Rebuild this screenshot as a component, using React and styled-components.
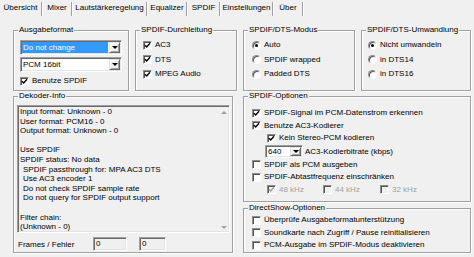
import React from "react";
import styled, { createGlobalStyle, css } from "styled-components";

const FACE = "#f0f0f0";

const GlobalStyle = createGlobalStyle`
  html, body {
    margin: 0;
    padding: 0;
    background: ${FACE};
  }
  body {
    font-family: "Liberation Sans", Arial, sans-serif;
    font-size: 8px;
    color: #000;
  }
`;

const sunken = css`
  box-sizing: border-box;
  border: 1px solid;
  border-color: #a0a0a0 #fff #fff #a0a0a0;
  box-shadow: inset 1px 1px 0 #696969, inset -1px -1px 0 #e3e3e3;
`;

const tabs = [
  ["Übersicht", 43],
  ["Mixer", 30],
  ["Lautstärkeregelung", 75],
  ["Equalizer", 40],
  ["SPDIF", 33],
  ["Einstellungen", 53],
  ["Über", 30],
];

const infoLines = [
  ["Input format: Unknown - 0"],
  ["User format: PCM16 - 0"],
  ["Output format: Unknown - 0"],
  [""],
  ["Use SPDIF"],
  ["SPDIF status: No data"],
  ["SPDIF passthrough for: MPA AC3 DTS", true],
  ["Use AC3 encoder 1", true],
  ["Do not check SPDIF sample rate", true],
  ["Do not query for SPDIF output support", true],
  [""],
  ["Filter chain:"],
  ["(Unknown - 0)"],
];

function Check({ on, disabled }) {
  return (
    <Box $disabled={disabled}>
      {on && (
        <svg width="7" height="7" viewBox="0 0 7 7">
          <path
            d="M1 3.2 L2.7 5 L6 1.3"
            fill="none"
            stroke={disabled ? "#a0a0a0" : "#000"}
            strokeWidth="1.4"
          />
        </svg>
      )}
    </Box>
  );
}

function CheckItem({ on, disabled, children, h, indent }) {
  return (
    <Row $h={h} $indent={indent} $disabled={disabled}>
      <Check on={on} disabled={disabled} />
      {children}
    </Row>
  );
}

function RadioItem({ on, children, h }) {
  return (
    <Row $h={h}>
      <Radio $on={on} />
      {children}
    </Row>
  );
}

function Dropdown({ value, selected, w, h }) {
  return (
    <Combo $w={w} $h={h}>
      <ComboValue $selected={selected}>{value}</ComboValue>
      <DropButton />
    </Combo>
  );
}

export default function App() {
  return (
    <Page>
      <GlobalStyle />
      {/* TAB STRIP */}
      <TabBar>
        {tabs.map(([name, w]) => (
          <Tab key={name} $w={w}>
            <TabLabel>{name}</TabLabel>
            <TabSep />
          </Tab>
        ))}
      </TabBar>

      <Content>
        {/* TOP ROW */}
        <TopRow>
          <Group $pad="9px 0 0 6px">
            <Legend>Ausgabeformat</Legend>
            <Dropdown value="Do not change" selected w={102} h={15} />
            <Spacer $h={2} />
            <Dropdown value="PCM 16bit" w={102} h={15} />
            <Spacer $h={3} />
            <CheckItem on h={12}>
              Benutze SPDIF
            </CheckItem>
          </Group>

          <Group $pad="7px 0 0 7px">
            <Legend>SPDIF-Durchleitung</Legend>
            <CheckItem on>AC3</CheckItem>
            <CheckItem on>DTS</CheckItem>
            <CheckItem on>MPEG Audio</CheckItem>
          </Group>

          <Group $pad="7px 0 0 8px">
            <Legend>SPDIF/DTS-Modus</Legend>
            <RadioItem on>Auto</RadioItem>
            <RadioItem>SPDIF wrapped</RadioItem>
            <RadioItem>Padded DTS</RadioItem>
          </Group>

          <Group $pad="7px 0 0 6px">
            <Legend>SPDIF/DTS-Umwandlung</Legend>
            <RadioItem on>Nicht umwandeln</RadioItem>
            <RadioItem>in DTS14</RadioItem>
            <RadioItem>in DTS16</RadioItem>
          </Group>
        </TopRow>

        {/* BOTTOM ROW */}
        <BottomRow>
          <Group $pad="8px 0 0 3px" $h={157}>
            <Legend>Dekoder-Info</Legend>
            <InfoBox>
              <InfoText>
                {infoLines.map(([t, indent], i) => (
                  <InfoLine key={i} $indent={indent}>
                    {t}
                  </InfoLine>
                ))}
              </InfoText>
              <ScrollCol>
                <ScrollArrow $dir="up" />
                <ScrollArrow $dir="down" />
              </ScrollCol>
            </InfoBox>
            <FramesRow>
              <FramesLabel>Frames / Fehler</FramesLabel>
              <Field $w={34}>0</Field>
              <Field $w={27}>0</Field>
            </FramesRow>
          </Group>

          <RightCol>
            <Group $pad="10px 0 0 8px" $h={106}>
              <Legend>SPDIF-Optionen</Legend>
              <CheckItem on h={12.5}>
                SPDIF-Signal im PCM-Datenstrom erkennen
              </CheckItem>
              <CheckItem on h={12.5}>
                Benutze AC3-Kodierer
              </CheckItem>
              <CheckItem on h={12.5} indent={15}>
                Kein Stereo-PCM kodieren
              </CheckItem>
              <BitrateRow>
                <Dropdown value="640" w={38} h={13} />
                <span>AC3-Kodierbitrate (kbps)</span>
              </BitrateRow>
              <CheckItem h={12.5}>SPDIF als PCM ausgeben</CheckItem>
              <CheckItem h={12.5}>SPDIF-Abtastfrequenz einschränken</CheckItem>
              <FreqRow>
                <CheckItem on disabled h={12.5}>
                  48 kHz
                </CheckItem>
                <CheckItem disabled h={12.5}>
                  44 kHz
                </CheckItem>
                <CheckItem disabled h={12.5}>
                  32 kHz
                </CheckItem>
              </FreqRow>
            </Group>

            <Group $pad="5px 0 0 8px" $h={45}>
              <Legend>DirectShow-Optionen</Legend>
              <CheckItem h={12.5}>Überprüfe Ausgabeformatunterstützung</CheckItem>
              <CheckItem h={12.5}>
                Soundkarte nach Zugriff / Pause reinitialisieren
              </CheckItem>
              <CheckItem h={12.5}>
                PCM-Ausgabe im SPDIF-Modus deaktivieren
              </CheckItem>
            </Group>
          </RightCol>
        </BottomRow>
      </Content>
    </Page>
  );
}

const Page = styled.div`
  width: 474px;
  height: 257px;
  overflow: hidden;
  background: ${FACE};
`;

/* tabs */
const TabBar = styled.div`
  display: flex;
  height: 17px;
`;

const Tab = styled.div`
  display: flex;
  width: ${(p) => p.$w}px;
`;

const TabLabel = styled.span`
  flex: 1;
  text-align: center;
  line-height: 15px;
  white-space: nowrap;
`;

const TabSep = styled.span`
  width: 1px;
  height: 14px;
  margin-top: 2px;
  background: #a0a0a0;
  border-right: 1px solid #fff;
`;

/* layout */
const Content = styled.div`
  padding: 13px 0 0 13px;
  display: flex;
  flex-direction: column;
  gap: 5px;
`;

const TopRow = styled.div`
  display: grid;
  grid-template-columns: 116px 102px 112px 110px;
  column-gap: 6px;
  height: 61px;
`;

const BottomRow = styled.div`
  display: grid;
  grid-template-columns: 220px 228px;
  column-gap: 10px;
`;

const RightCol = styled.div`
  display: flex;
  flex-direction: column;
  gap: 6px;
`;

const Spacer = styled.div`
  height: ${(p) => p.$h}px;
  flex: none;
`;

/* group box */
const Group = styled.div`
  position: relative;
  box-sizing: border-box;
  height: ${(p) => (p.$h ? `${p.$h}px` : "auto")};
  border: 1px solid #a0a0a0;
  box-shadow: inset 1px 1px 0 #fff, 1px 1px 0 #fff;
  padding: ${(p) => p.$pad || "0"};
  display: flex;
  flex-direction: column;
`;

const Legend = styled.span`
  position: absolute;
  top: -6px;
  left: 4px;
  padding: 0 1px;
  line-height: 10px;
  background: ${FACE};
  white-space: nowrap;
`;

/* check / radio */
const Row = styled.label`
  display: flex;
  align-items: center;
  flex: none;
  height: ${(p) => p.$h || 14.5}px;
  line-height: ${(p) => p.$h || 14.5}px;
  padding-left: ${(p) => p.$indent || 0}px;
  color: ${(p) => (p.$disabled ? "#a0a0a0" : "#000")};
  white-space: nowrap;
`;

const Box = styled.span`
  box-sizing: border-box;
  flex: none;
  width: 9px;
  height: 9px;
  margin-right: 3px;
  border: 1px solid;
  border-color: #8d8d8d #fff #fff #8d8d8d;
  box-shadow: inset 1px 1px 0 #555;
  background: ${(p) => (p.$disabled ? FACE : "#fff")};
  display: flex;
  align-items: center;
  justify-content: center;
  svg {
    display: block;
  }
`;

const Radio = styled.span`
  box-sizing: border-box;
  flex: none;
  width: 9px;
  height: 9px;
  margin-right: 3px;
  border-radius: 50%;
  border: 1px solid;
  border-color: #8d8d8d #fff #fff #8d8d8d;
  box-shadow: inset 1px 1px 0 #555;
  background: #fff;
  display: flex;
  align-items: center;
  justify-content: center;
  &::after {
    content: "";
    display: ${(p) => (p.$on ? "block" : "none")};
    width: 3px;
    height: 3px;
    border-radius: 50%;
    background: #000;
  }
`;

/* combobox */
const Combo = styled.div`
  ${sunken};
  flex: none;
  display: flex;
  width: ${(p) => p.$w}px;
  height: ${(p) => p.$h}px;
  padding: 1px;
  background: #fff;
`;

const ComboValue = styled.span`
  flex: 1;
  display: flex;
  align-items: center;
  padding-left: 1px;
  margin-right: 1px;
  background: ${(p) => (p.$selected ? "#3399ff" : "transparent")};
  color: ${(p) => (p.$selected ? "#fff" : "#000")};
  white-space: nowrap;
  overflow: hidden;
`;

const DropButton = styled.span`
  box-sizing: border-box;
  flex: none;
  width: 11px;
  background: ${FACE};
  border: 1px solid;
  border-color: #e3e3e3 #696969 #696969 #e3e3e3;
  box-shadow: inset 1px 1px 0 #fff, inset -1px -1px 0 #a0a0a0;
  display: flex;
  align-items: center;
  justify-content: center;
  &::after {
    content: "";
    width: 0;
    height: 0;
    border-left: 3px solid transparent;
    border-right: 3px solid transparent;
    border-top: 3px solid #000;
  }
`;

const BitrateRow = styled.div`
  display: flex;
  align-items: center;
  gap: 2px;
  height: 14px;
  flex: none;
  padding-left: 13px;
  white-space: nowrap;
`;

const FreqRow = styled.div`
  display: grid;
  grid-template-columns: 56px 57px auto;
  padding-left: 15px;
`;

/* decoder info */
const InfoBox = styled.div`
  ${sunken};
  display: flex;
  width: 213px;
  height: 128px;
  padding: 1px;
  background: ${FACE};
`;

const InfoText = styled.div`
  flex: 1;
  padding-left: 1px;
  overflow: hidden;
`;

const InfoLine = styled.div`
  height: 9.6px;
  line-height: 9.6px;
  padding-left: ${(p) => (p.$indent ? 3 : 0)}px;
  white-space: pre;
`;

const ScrollCol = styled.div`
  width: 9px;
  display: flex;
  flex-direction: column;
  justify-content: space-between;
  align-items: center;
  padding: 4px 0 2px;
`;

const ScrollArrow = styled.span`
  width: 0;
  height: 0;
  border-left: 3px solid transparent;
  border-right: 3px solid transparent;
  ${(p) =>
    p.$dir === "up"
      ? "border-bottom: 3px solid #a0a0a0;"
      : "border-top: 3px solid #a0a0a0;"}
`;

const FramesRow = styled.div`
  display: flex;
  align-items: center;
  margin-top: 4px;
  height: 14px;
  gap: 12px;
`;

const FramesLabel = styled.span`
  width: 63px;
  padding-left: 1px;
  white-space: nowrap;
`;

const Field = styled.div`
  ${sunken};
  width: ${(p) => p.$w}px;
  height: 14px;
  padding: 1px 2px;
  line-height: 10px;
  background: ${FACE};
`;
